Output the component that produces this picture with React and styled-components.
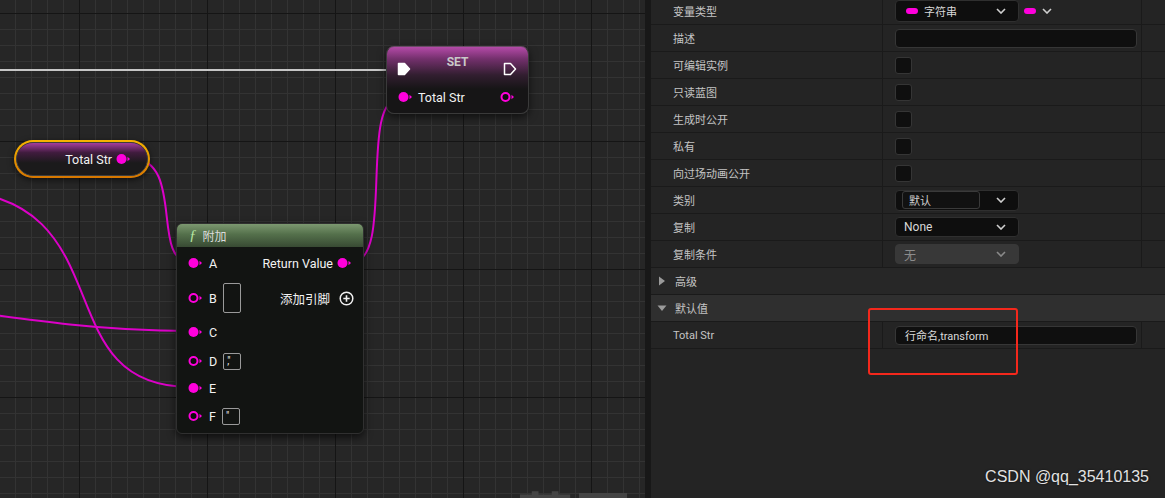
import styled, { createGlobalStyle } from "styled-components";

const PINK = "#ff00dc";
const WIRE = "#dc00c8";

const GlobalStyle = createGlobalStyle`
  html, body {
    margin: 0;
    padding: 0;
    background: #242424;
  }
  body {
    font-family: Roboto, "Noto Sans CJK SC", sans-serif;
    overflow: hidden;
  }
  * {
    box-sizing: border-box;
  }
`;

const Screen = styled.div`
  position: relative;
  display: flex;
  width: 1165px;
  height: 498px;
  overflow: hidden;
`;

/* ---------- graph canvas ---------- */

const Canvas = styled.div`
  position: relative;
  flex: 0 0 645px;
  height: 100%;
  overflow: hidden;
  background-color: #262626;
  background-image:
    linear-gradient(to right, #151515 1px, transparent 1px),
    linear-gradient(to bottom, #151515 1px, transparent 1px),
    linear-gradient(to right, #333333 1px, transparent 1px),
    linear-gradient(to bottom, #333333 1px, transparent 1px);
  background-size: 128px 128px, 128px 128px, 16px 16px, 16px 16px;
  background-position: 79px 13px, 79px 13px, 15px 13px, 15px 13px;
`;

const Splitter = styled.div`
  flex: 0 0 6px;
  background: #181818;
`;

const Wires = styled.svg`
  position: absolute;
  inset: 0;
  pointer-events: none;
`;

const Watermark = styled.div`
  position: absolute;
  left: 517px;
  top: 487px;
  font-family: "Noto Sans CJK SC", sans-serif;
  font-size: 56px;
  line-height: 1;
  font-weight: 700;
  color: #444444;
  letter-spacing: 2px;
`;

const SetNode = styled.div`
  position: absolute;
  left: 386px;
  top: 46px;
  width: 143px;
  height: 68px;
  padding-top: 8px;
  border-radius: 8px;
  border: 1px solid #3a3a3a;
  border-top-color: #6a4a66;
  background: linear-gradient(
    180deg,
    #b44aa8 0px,
    #73306c 12px,
    #321e30 28px,
    #161516 42px
  );
  box-shadow: 0 3px 8px rgba(0, 0, 0, 0.6);
`;

const SetTitle = styled.div`
  height: 14px;
  line-height: 14px;
  text-align: center;
  font-size: 12px;
  font-weight: 700;
  color: #c9c9c9;
`;

const ExecRow = styled.div`
  display: flex;
  justify-content: space-between;
  align-items: center;
  height: 16px;
  margin-top: -8px;
  padding: 0 11px 0 10px;
`;

const PinRow = styled.div`
  display: flex;
  align-items: center;
  justify-content: space-between;
  height: ${(p) => p.h || 24}px;
  padding: 0 ${(p) => p.pr || 12}px 0 ${(p) => p.pl || 11}px;
  margin-top: ${(p) => p.mt || 0}px;
`;

const PinSide = styled.div`
  display: flex;
  align-items: center;
  gap: ${(p) => p.gap || 6}px;
`;

const PinLabel = styled.span`
  font-size: 12.5px;
  color: #f2f2f2;
  white-space: nowrap;
`;

const GetterRing = styled.div`
  position: absolute;
  left: 14px;
  top: 140px;
  width: 136px;
  height: 38px;
  padding: 2px;
  border-radius: 19px;
  background: linear-gradient(180deg, #f8b400, #d67600);
  box-shadow: 0 2px 6px rgba(0, 0, 0, 0.6);
`;

const GetterBody = styled.div`
  display: flex;
  align-items: center;
  justify-content: flex-end;
  gap: 4px;
  height: 100%;
  padding-right: 16px;
  border-radius: 17px;
  border: 1px solid #3d3d3d;
  background:
    linear-gradient(
      180deg,
      rgba(200, 70, 190, 0.8) 0%,
      rgba(110, 30, 105, 0.45) 30%,
      rgba(27, 26, 27, 0) 62%
    ),
    #1b1a1b;
`;

const FuncNode = styled.div`
  position: absolute;
  left: 176px;
  top: 223px;
  width: 188px;
  height: 211px;
  border-radius: 6px;
  border: 1px solid #303030;
  background: #121412;
  box-shadow: 0 3px 8px rgba(0, 0, 0, 0.65);
  overflow: hidden;
`;

const FuncHeader = styled.div`
  display: flex;
  align-items: center;
  gap: 6px;
  height: 23px;
  padding-left: 12px;
  background: linear-gradient(180deg, #7c9870 0%, #54704b 45%, #384a33 100%);
  font-size: 12px;
  color: #dcdcdc;
`;

const FuncGlyph = styled.span`
  font-family: "Liberation Serif", serif;
  font-style: italic;
  font-size: 15px;
  color: #b6e6a2;
`;

const FuncBody = styled.div`
  padding-top: 4px;
`;

const ValueBox = styled.div`
  width: 18px;
  height: ${(p) => p.h || 17}px;
  border: 1px solid #9a9a9a;
  border-radius: 2px;
  font-size: 10px;
  line-height: 13px;
  color: #eee;
  padding-left: 3px;
  letter-spacing: -1px;
`;

const PinSvg = styled.svg`
  display: block;
  flex: none;
`;

const DataPin = ({ filled }) => (
  <PinSvg width="15" height="12" viewBox="0 0 15 12">
    <circle
      cx="5.5"
      cy="6"
      r={filled ? 5 : 4}
      fill={filled ? PINK : "#0d0d0d"}
      stroke={PINK}
      strokeWidth={filled ? 0 : 2}
    />
    <path d="M11.5 3.8 L14 6 L11.5 8.2 Z" fill={PINK} />
  </PinSvg>
);

const ExecPin = ({ filled }) => (
  <PinSvg width="14" height="14" viewBox="0 0 14 14">
    <path
      d="M1.5 1.5 H7.5 L12.5 7 L7.5 12.5 H1.5 Z"
      fill={filled ? "#ffffff" : "none"}
      stroke="#ffffff"
      strokeWidth="1.5"
      strokeLinejoin="round"
    />
  </PinSvg>
);

const AddPin = () => (
  <PinSvg width="15" height="15" viewBox="0 0 15 15">
    <circle cx="7.5" cy="7.5" r="6.3" fill="none" stroke="#f0f0f0" strokeWidth="1.5" />
    <path d="M7.5 4.3 V10.7 M4.3 7.5 H10.7" stroke="#f0f0f0" strokeWidth="1.6" />
  </PinSvg>
);

/* ---------- details panel ---------- */

const Panel = styled.div`
  flex: 1;
  display: flex;
  flex-direction: column;
  margin-top: -2px;
  background: #242424;
`;

const Row = styled.div`
  display: flex;
  align-items: stretch;
  height: 27px;
  flex: none;
  border-bottom: 1px solid #1a1a1a;
  background: ${(p) => p.bg || "#242424"};
`;

const LabelCell = styled.div`
  display: flex;
  align-items: center;
  width: 232px;
  flex: none;
  padding-left: 22px;
  border-right: 1px solid #1a1a1a;
  font-size: 11px;
  color: #c4c4c4;
`;

const ValueCell = styled.div`
  display: flex;
  align-items: center;
  gap: 5px;
  width: 259px;
  flex: none;
  padding-left: 12px;
  border-right: 1px solid #1a1a1a;
`;

const SectionCell = styled.div`
  display: flex;
  align-items: center;
  gap: 8px;
  padding-left: 6px;
  font-size: 11px;
  color: #c4c4c4;
`;

const Dropdown = styled.div`
  display: flex;
  align-items: center;
  justify-content: space-between;
  width: ${(p) => p.w || 124}px;
  height: ${(p) => p.h || 20}px;
  padding: 0 12px 0 ${(p) => p.pl || 8}px;
  border-radius: 4px;
  border: 1px solid ${(p) => (p.disabled ? "#383838" : "#2f2f2f")};
  background: ${(p) => (p.disabled ? "#383838" : "#0e0e0e")};
  font-size: ${(p) => p.fs || 12}px;
  color: ${(p) => (p.disabled ? "#8c8c8c" : "#d8d8d8")};
`;

const DropText = styled.div`
  display: flex;
  align-items: center;
  gap: 6px;
`;

const Pill = styled.span`
  display: inline-block;
  width: 12px;
  height: 6px;
  border-radius: 3px;
  background: ${PINK};
`;

const TextField = styled.div`
  display: flex;
  align-items: center;
  width: 242px;
  height: 19px;
  padding-left: 9px;
  border-radius: 4px;
  border: 1px solid #363636;
  background: #0f0f0f;
  font-size: 11px;
  color: #dadada;
`;

const CheckBox = styled.div`
  width: 17px;
  height: 17px;
  border-radius: 3px;
  border: 1px solid #353535;
  background: #0f0f0f;
`;

const InnerCombo = styled.div`
  display: flex;
  align-items: center;
  width: 78px;
  height: 18px;
  margin-left: -1px;
  padding-left: 6px;
  border-radius: 3px;
  border: 1px solid #3a3a3a;
  background: #111;
  font-size: 11px;
  color: #cfcfcf;
`;

const Chevron = ({ color = "#cfcfcf" }) => (
  <PinSvg width="10" height="6" viewBox="0 0 10 6">
    <polyline points="1,1 5,5 9,1" fill="none" stroke={color} strokeWidth="1.6" />
  </PinSvg>
);

const Triangle = ({ open }) => (
  <PinSvg width="10" height="10" viewBox="0 0 10 10">
    {open ? (
      <path d="M0.5 2.5 H9.5 L5 8 Z" fill="#9a9a9a" />
    ) : (
      <path d="M2 0.5 V9.5 L8 5 Z" fill="#9a9a9a" />
    )}
  </PinSvg>
);

const Highlight = styled.div`
  position: absolute;
  left: 868px;
  top: 308px;
  width: 150px;
  height: 67px;
  border: 2px solid #f4281c;
  border-radius: 3px;
  pointer-events: none;
`;

const Credit = styled.div`
  position: absolute;
  right: 16px;
  top: 468px;
  font-family: "Liberation Sans", Arial, sans-serif;
  font-size: 16px;
  color: #e2e2e2;
  text-shadow: 0 0 2px rgba(0, 0, 0, 0.8);
`;

const CheckRow = ({ label }) => (
  <Row>
    <LabelCell>{label}</LabelCell>
    <ValueCell>
      <CheckBox />
    </ValueCell>
  </Row>
);

export default function App() {
  return (
    <Screen>
      <GlobalStyle />
      <Canvas>
        <Watermark>蓝图</Watermark>
        <Wires width="645" height="498">
          <line x1="0" y1="70" x2="398" y2="70" stroke="#c6c6c6" strokeWidth="2" />
          <g fill="none" stroke={WIRE} strokeWidth="2">
            <path d="M130 158 C 186 158, 150 262, 190 262" />
            <path d="M-110 300 C 50 324, 110 331, 190 331" />
            <path d="M-60 190 C 130 190, 40 387, 190 387" />
            <path d="M352 262 C 395 262, 358 98, 400 98" />
          </g>
        </Wires>

        <SetNode>
          <SetTitle>SET</SetTitle>
          <ExecRow>
            <ExecPin filled />
            <ExecPin />
          </ExecRow>
          <PinRow h={24} mt={8} pl={11} pr={13}>
            <PinSide gap={5}>
              <DataPin filled />
              <PinLabel>Total Str</PinLabel>
            </PinSide>
            <DataPin />
          </PinRow>
        </SetNode>

        <GetterRing>
          <GetterBody>
            <PinLabel>Total Str</PinLabel>
            <DataPin filled />
          </GetterBody>
        </GetterRing>

        <FuncNode>
          <FuncHeader>
            <FuncGlyph>ƒ</FuncGlyph>
            附加
          </FuncHeader>
          <FuncBody>
            <PinRow h={24} pl={11} pr={11}>
              <PinSide>
                <DataPin filled />
                <PinLabel>A</PinLabel>
              </PinSide>
              <PinSide gap={4}>
                <PinLabel>Return Value</PinLabel>
                <DataPin filled />
              </PinSide>
            </PinRow>
            <PinRow h={46} pl={11} pr={9}>
              <PinSide>
                <DataPin />
                <PinLabel>B</PinLabel>
                <ValueBox h={30} />
              </PinSide>
              <PinSide gap={9}>
                <PinLabel>添加引脚</PinLabel>
                <AddPin />
              </PinSide>
            </PinRow>
            <PinRow h={22} pl={11}>
              <PinSide>
                <DataPin filled />
                <PinLabel>C</PinLabel>
              </PinSide>
            </PinRow>
            <PinRow h={36} pl={11}>
              <PinSide>
                <DataPin />
                <PinLabel>D</PinLabel>
                <ValueBox>,"</ValueBox>
              </PinSide>
            </PinRow>
            <PinRow h={18} pl={11}>
              <PinSide>
                <DataPin filled />
                <PinLabel>E</PinLabel>
              </PinSide>
            </PinRow>
            <PinRow h={38} pl={11}>
              <PinSide>
                <DataPin />
                <PinLabel>F</PinLabel>
                <ValueBox>"</ValueBox>
              </PinSide>
            </PinRow>
          </FuncBody>
        </FuncNode>
      </Canvas>

      <Splitter />

      <Panel>
        <Row>
          <LabelCell>变量类型</LabelCell>
          <ValueCell>
            <Dropdown h={22} pl={10} fs={11}>
              <DropText>
                <Pill />
                字符串
              </DropText>
              <Chevron />
            </Dropdown>
            <DropText>
              <Pill />
              <Chevron />
            </DropText>
          </ValueCell>
        </Row>
        <Row>
          <LabelCell>描述</LabelCell>
          <ValueCell>
            <TextField />
          </ValueCell>
        </Row>
        <CheckRow label="可编辑实例" />
        <CheckRow label="只读蓝图" />
        <CheckRow label="生成时公开" />
        <CheckRow label="私有" />
        <CheckRow label="向过场动画公开" />
        <Row>
          <LabelCell>类别</LabelCell>
          <ValueCell>
            <Dropdown h={21} pl={7}>
              <InnerCombo>默认</InnerCombo>
              <Chevron />
            </Dropdown>
          </ValueCell>
        </Row>
        <Row>
          <LabelCell>复制</LabelCell>
          <ValueCell>
            <Dropdown>
              None
              <Chevron />
            </Dropdown>
          </ValueCell>
        </Row>
        <Row>
          <LabelCell>复制条件</LabelCell>
          <ValueCell>
            <Dropdown disabled>
              无
              <Chevron color="#8a8a8a" />
            </Dropdown>
          </ValueCell>
        </Row>
        <Row bg="#272727">
          <SectionCell>
            <Triangle />
            高级
          </SectionCell>
        </Row>
        <Row bg="#2f2f2f">
          <SectionCell>
            <Triangle open />
            默认值
          </SectionCell>
        </Row>
        <Row>
          <LabelCell>Total Str</LabelCell>
          <ValueCell>
            <TextField>行命名,transform</TextField>
          </ValueCell>
        </Row>
      </Panel>

      <Highlight />
      <Credit>CSDN @qq_35410135</Credit>
    </Screen>
  );
}
